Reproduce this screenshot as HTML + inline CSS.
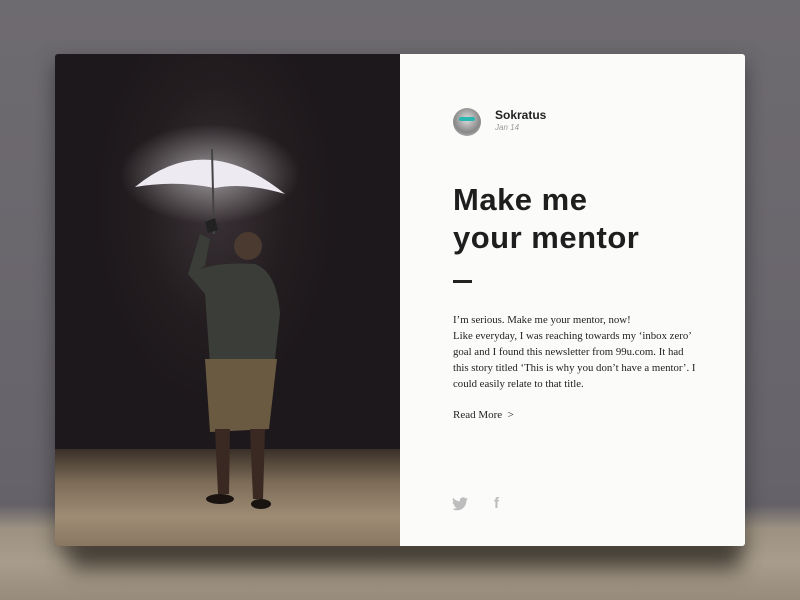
<!DOCTYPE html>
<html><head><style>
body{margin:0;width:800px;height:600px;overflow:hidden;position:relative;background:linear-gradient(#6e6b70 0%,#66636a 80%,#5e5b60 100%);font-family:"Liberation Sans",sans-serif}
.ground{position:absolute;left:0;top:505px;width:800px;height:95px;background:linear-gradient(180deg,rgba(150,140,125,0) 0%,#9d9282 25%,#a89d8c 60%,#978b7b 100%)}
.shadow{position:absolute;left:70px;top:540px;width:670px;height:30px;background:rgba(20,15,10,.55);filter:blur(10px)}
.card{position:absolute;left:55px;top:54px;width:690px;height:492px;border-radius:3px;overflow:hidden;box-shadow:0 8px 20px rgba(0,0,0,.4)}
.photo{position:absolute;left:0;top:0;width:345px;height:492px;background:radial-gradient(ellipse 120px 200px at 160px 150px,#3a3236 0%,#231d20 60%,#1d181b 100%)}
.floor{position:absolute;left:0;top:395px;width:345px;height:97px;background:linear-gradient(180deg,#3a3028 0%,#7d6c58 35%,#9e8c75 70%,#8a7762 100%)}
.right{position:absolute;left:345px;top:0;width:345px;height:492px;background:#fbfcfa}
.av{position:absolute;left:53px;top:54px;width:28px;height:28px;border-radius:50%;background:radial-gradient(circle at 50% 40%,#ddd 0,#888 60%,#ccc 100%)}
.av:after{content:"";position:absolute;left:6px;top:9px;width:16px;height:4px;background:#2bb7b0;border-radius:2px}
.name{position:absolute;left:95px;top:54px;font-size:12px;font-weight:bold;color:#222}
.date{position:absolute;left:95px;top:69px;font-size:8px;font-style:italic;color:#999}
h1{position:absolute;left:53px;top:127px;margin:0;font-size:31px;line-height:38px;font-weight:bold;color:#1e1e1e;letter-spacing:.5px}
.dash{position:absolute;left:53px;top:226px;width:19px;height:3px;background:#222}
.body{position:absolute;left:53px;top:258px;white-space:nowrap;font-family:"Liberation Serif",serif;font-size:10.8px;line-height:16px;color:#222}
.rm{position:absolute;left:53px;top:355px;font-family:"Liberation Serif",serif;font-size:11px;color:#222}
</style></head><body>
<div class="ground"></div><div class="shadow"></div>
<div class="card">
<div class="photo">
<div class="floor"></div>
<svg width="345" height="492" style="position:absolute;left:0;top:0">
<defs><radialGradient id="g"><stop offset="0" stop-color="#fff" stop-opacity=".5"/><stop offset="1" stop-color="#fff" stop-opacity="0"/></radialGradient></defs>
<ellipse cx="155" cy="120" rx="90" ry="50" fill="url(#g)"/>
<path d="M80 133 Q150 75 230 140 Q190 128 160 134 Q120 126 80 133Z" fill="#eeeaf2"/>
<line x1="157" y1="95" x2="159" y2="180" stroke="#444" stroke-width="2"/>
<path d="M150 168 l10 -4 3 12 -10 3z" fill="#222"/>
<circle cx="193" cy="192" r="14" fill="#4a3a30"/>
<path d="M145 215 Q165 208 200 210 Q222 218 225 260 L220 305 L155 310 L150 240 L133 220 L145 180 L155 185 L150 212Z" fill="#3a3d38"/>
<path d="M150 305 L222 305 L214 375 L155 378Z" fill="#6b5a42"/>
<path d="M160 375 L175 375 L174 440 L163 440Z M195 375 L210 375 L208 445 L198 445Z" fill="#3a2822"/>
<ellipse cx="165" cy="445" rx="14" ry="5" fill="#1a1410"/><ellipse cx="206" cy="450" rx="10" ry="5" fill="#1a1410"/>
</svg>
</div>
<div class="right">
<div class="av"></div>
<div class="name">Sokratus</div>
<div class="date">Jan 14</div>
<h1>Make me<br>your mentor</h1>
<div class="dash"></div>
<div class="body">I’m serious. Make me your mentor, now!<br>Like everyday, I was reaching towards my ‘inbox zero’<br>goal and I found this newsletter from 99u.com. It had<br>this story titled ‘This is why you don’t have a mentor’. I<br>could easily relate to that title.</div>
<div class="rm">Read More &nbsp;&gt;</div>
<svg style="position:absolute;left:52px;top:443px" width="16" height="14" viewBox="0 0 24 20"><path d="M24 2.4a10 10 0 0 1-2.8.8A5 5 0 0 0 23.3.4a10 10 0 0 1-3.1 1.2A4.9 4.9 0 0 0 11.8 6 14 14 0 0 1 1.7.9a4.9 4.9 0 0 0 1.5 6.6A4.9 4.9 0 0 1 1 6.9 4.9 4.9 0 0 0 4.9 11.8a5 5 0 0 1-2.2.1 4.9 4.9 0 0 0 4.6 3.4A9.9 9.9 0 0 1 0 17.3 14 14 0 0 0 7.5 19.5c9 0 14-7.5 14-14v-.6A10 10 0 0 0 24 2.4z" fill="#bdbdbd"/></svg>
<div style="position:absolute;left:94px;top:441px;font-size:15px;font-weight:bold;color:#bdbdbd">f</div>
</div>
</div>
</body></html>
